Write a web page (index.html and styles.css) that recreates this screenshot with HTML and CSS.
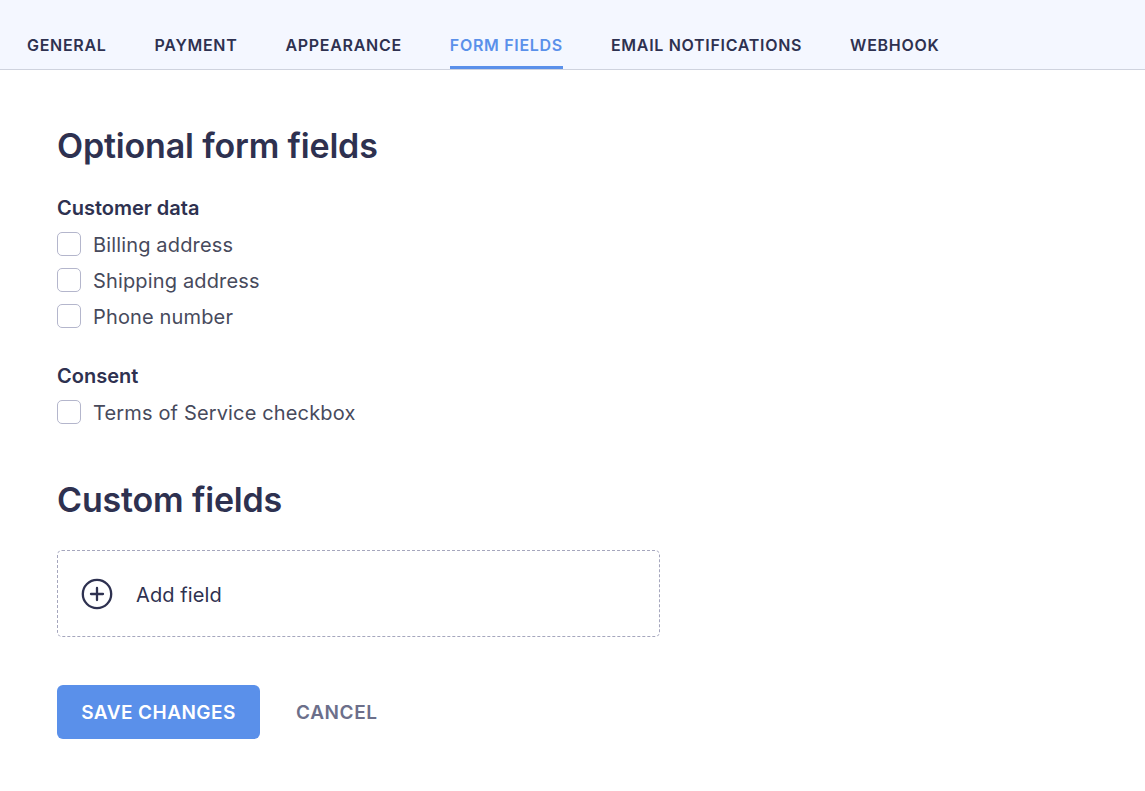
FILE: index.html
```html
<!DOCTYPE html>
<html lang="en">
<head>
<meta charset="utf-8">
<title>Form fields</title>
<link rel="stylesheet" href="styles.css">
</head>
<body>
<nav class="tabs">
  <a class="tab">GENERAL</a>
  <a class="tab">PAYMENT</a>
  <a class="tab">APPEARANCE</a>
  <a class="tab active">FORM FIELDS</a>
  <a class="tab">EMAIL NOTIFICATIONS</a>
  <a class="tab">WEBHOOK</a>
</nav>
<main class="content">
  <h1 class="title">Optional form fields</h1>
  <h2 class="group">Customer data</h2>
  <ul class="checks">
    <li class="check"><span class="box"></span>Billing address</li>
    <li class="check"><span class="box"></span>Shipping address</li>
    <li class="check"><span class="box"></span>Phone number</li>
  </ul>
  <h2 class="group consent">Consent</h2>
  <ul class="checks">
    <li class="check"><span class="box"></span>Terms of Service checkbox</li>
  </ul>
  <h1 class="title custom">Custom fields</h1>
  <div class="add">
    <svg class="plus" width="32" height="32" viewBox="0 0 32 32" fill="none" stroke="#2e3150" stroke-width="2.3" stroke-linecap="round"><circle cx="16" cy="16" r="14.2"/><path d="M16 10v12M10 16h12"/></svg>
    <span class="add-label">Add field</span>
  </div>
  <div class="actions">
    <button class="save">SAVE CHANGES</button>
    <button class="cancel">CANCEL</button>
  </div>
</main>
</body>
</html>
```
FILE: styles.css
```css
* { box-sizing: border-box; }
html, body { margin: 0; padding: 0; background: #fff; }
body { font-family: Inter, "Liberation Sans", sans-serif; color: #2e3150; height: 791px; overflow: hidden; }
.tabs { display: flex; gap: 48px; height: 70px; padding: 0 0 0 27px; background: #f4f7ff; border-bottom: 1px solid #cfd3de; }
.tab { display: flex; align-items: center; height: 69px; padding-top: 24px; font-size: 16px; font-weight: 600; letter-spacing: 0.7px; color: #2e3150; border-bottom: 3px solid transparent; }
.tab.active { color: #5a90ea; border-bottom-color: #5a90ea; }
.content { padding: 0 57px; }
.title { margin: 0; font-size: 34px; line-height: 44px; font-weight: 600; letter-spacing: -0.17px; color: #2e3150; }
.title:first-child { padding-top: 54px; height: 98px; }
.group { margin: 28px 0 0; font-size: 20px; line-height: 24px; font-weight: 600; color: #2e3150; }
.group.consent { margin-top: 29px; }
.checks { list-style: none; margin: 7px 0 0; padding: 0; }
.check { display: flex; align-items: center; height: 36px; font-size: 20px; letter-spacing: 0.15px; color: #474a5c; }
.box { width: 24px; height: 24px; margin: -2px 12px 0 0; background: #fff; border: 1px solid #b4b6cc; border-radius: 5px; }
.custom { margin-top: 47px; }
.add { display: flex; align-items: center; width: 603px; height: 87px; margin-top: 28px; padding-left: 23px; border: 1px dashed #a5a6bd; border-radius: 5px; font-size: 20px; color: #2e3150; }
.plus { margin-right: 23px; }
.add-label { padding-top: 2px; letter-spacing: 0.1px; }
.actions { display: flex; align-items: center; gap: 36px; margin-top: 48px; }
.save, .cancel { font-family: inherit; font-size: 19px; font-weight: 600; letter-spacing: 0.45px; border: 0; padding: 0; }
.save { width: 203px; height: 54px; background: #5a90ea; color: #fff; border-radius: 6px; }
.cancel { background: none; color: #6c6f8a; letter-spacing: 0.6px; }
```
